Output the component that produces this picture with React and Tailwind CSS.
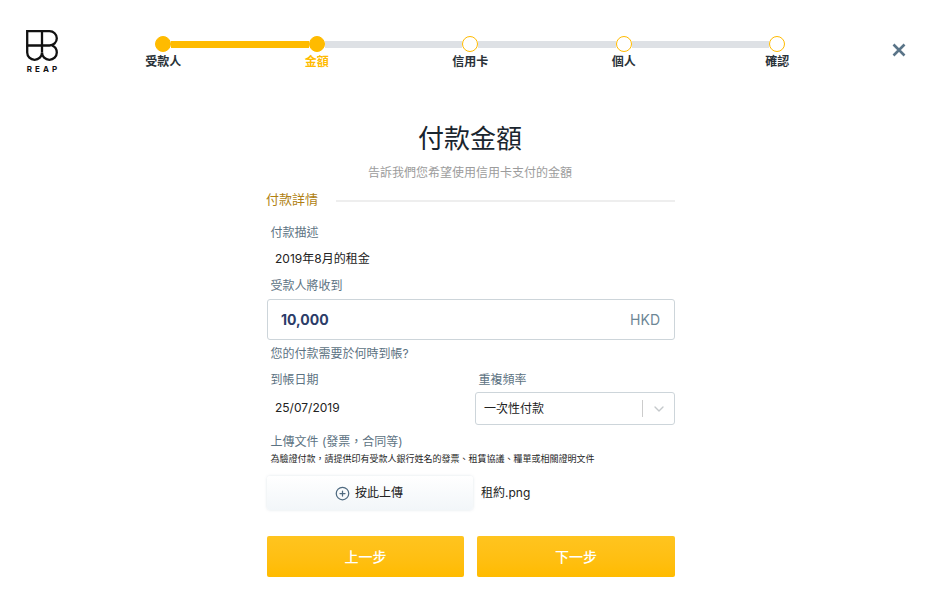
import React from 'react';
import { ChevronDown, CirclePlus } from 'lucide-react';

const steps = [
  { label: '受款人', done: true },
  { label: '金額', done: true, current: true },
  { label: '信用卡' },
  { label: '個人' },
  { label: '確認' },
];

function Logo() {
  return (
    <div className="w-[32px] flex flex-col items-center">
      <svg width="32" height="31" viewBox="0 0 32 31" fill="none" stroke="#111" strokeWidth="2.3">
        <path d="M1.200 1.200H23.500C27.500 1.200 30.800 4.300 30.800 8.200C30.800 12.200 27.500 15.500 23.500 15.500H1.200V1.200Z" />
        <path d="M16 1.200V22.500" />
        <path d="M1.200 15.500V22.500C1.200 26.500 4.500 29.800 8.600 29.800C12.700 29.800 16 26.500 16 22.500C16 26.500 19.300 29.800 23.400 29.800C27.500 29.800 30.800 26.500 30.800 22.500C30.800 19.500 29 16.700 26 15.500" />
      </svg>
      <div className="mt-[3px] text-[8px] leading-[10px] font-bold tracking-[3px] mr-[-3px] text-[#111]">REAP</div>
    </div>
  );
}

function Stepper() {
  return (
    <div className="w-[768px] shrink-0">
      <div className="flex items-center ml-[69px] w-[630px] pt-[6px]">
        {steps.map((s, i) => (
          <React.Fragment key={s.label}>
            {i > 0 && <div className={`flex-1 h-[7px] ${s.done ? 'bg-[#ffbb00]' : 'bg-[#dee1e5]'}`} />}
            <div className={`w-[16px] h-[16px] rounded-full border-[1.5px] border-[#ffbb00] ${s.done ? 'bg-[#ffbb00]' : 'bg-white'}`} />
          </React.Fragment>
        ))}
      </div>
      <div className="flex mt-[1px] ml-[0.5px]">
        {steps.map((s) => (
          <div
            key={s.label}
            className={`w-[153.5px] text-center text-[12px] leading-[18px] font-bold ${s.current ? 'text-[#ffbb00]' : 'text-[#2a3238]'}`}
          >
            {s.label}
          </div>
        ))}
      </div>
    </div>
  );
}

function FieldLabel({ children, className = '' }) {
  return <div className={`pl-[3.500px] text-[12px] leading-[18px] text-[#5c7282] ${className}`}>{children}</div>;
}

export default function App() {
  return (
    <div
      className="w-[947px] h-[615px] bg-white overflow-hidden text-[#222]"
      style={{ fontFamily: 'Inter, "Noto Sans CJK TC", sans-serif' }}
    >
      {/* Header */}
      <div className="flex items-start pt-[30px] pl-[26px]">
        <Logo />
        <div className="ml-[28px]">
          <Stepper />
        </div>
        <svg width="14" height="14" viewBox="0 0 14 14" className="ml-[38px] mt-[13px] shrink-0" stroke="#5a7488" strokeWidth="2.6" fill="none">
          <path d="M1.500 1.500L12.500 12.500M12.500 1.500L1.500 12.500" />
        </svg>
      </div>

      {/* Form */}
      <div className="w-[408px] ml-[267px] mt-[46px]">
        <h1 className="text-center text-[26px] leading-[38px] text-[#1a252e] mr-[2px] font-normal">付款金額</h1>
        <p className="mt-[6px] text-center text-[12px] leading-[18px] text-[#9c9c9c] mr-[2px]">告訴我們您希望使用信用卡支付的金額</p>

        <div className="flex items-center mt-[7px]">
          <span className="ml-[-1px] text-[13px] leading-[20px] text-[#b07f12]">付款詳情</span>
          <div className="ml-[18px] mt-[4px] flex-1 h-[2px] bg-[#eeeeee]" />
        </div>

        <FieldLabel className="mt-[15px]">付款描述</FieldLabel>
        <div className="mt-[8px] pl-[8px] text-[12px] leading-[18px]">2019年8月的租金</div>
        <FieldLabel className="mt-[9px]">受款人將收到</FieldLabel>
        <div className="mt-[4px] h-[41px] flex items-center justify-between pl-[13px] pr-[14px] border border-[#cdd5da] rounded-[3px]">
          <span className="text-[14px] font-bold text-[#2b3c68]">10,000</span>
          <span className="text-[14px] text-[#6d8796]">HKD</span>
        </div>
        <FieldLabel className="mt-[5px]">您的付款需要於何時到帳?</FieldLabel>

        <div className="flex mt-[8px]">
          <div className="w-[208px]">
            <FieldLabel>到帳日期</FieldLabel>
            <div className="mt-[10px] pl-[8px] text-[12px] leading-[18px]">25/07/2019</div>
          </div>
          <div className="w-[200px]">
            <FieldLabel>重複頻率</FieldLabel>
            <div className="mt-[3px] h-[33px] flex items-center border border-[#cdd5da] rounded-[3px] pl-[8px]">
              <span className="flex-1 text-[12px]">一次性付款</span>
              <div className="w-px h-[17px] bg-[#cccccc]" />
              <ChevronDown size={16} className="ml-[8px] mr-[7px] text-[#c4c8cb]" />
            </div>
          </div>
        </div>

        <FieldLabel className="mt-[8px]">上傳文件 (發票，合同等)</FieldLabel>
        <div className="mt-[1px] pl-[3.500px] text-[9px] leading-[14px] text-[#1f1f1f]">為驗證付款，請提供印有受款人銀行姓名的發票、租賃協議、糧單或相關證明文件</div>

        <div className="flex items-center mt-[10px]">
          <div className="w-[206px] h-[34px] flex items-center justify-center gap-[5px] pr-[2px] rounded-[3px] bg-gradient-to-b from-white to-[#f2f6f9] shadow-[0_0_3px_rgba(80,110,140,0.18)]">
            <CirclePlus size={15} strokeWidth={2} className="text-[#4e6a80]" />
            <span className="text-[12px] text-[#222]">按此上傳</span>
          </div>
          <span className="ml-[8px] text-[12px] text-[#222]">租約.png</span>
        </div>

        <div className="flex justify-between mt-[26px]">
          <button className="w-[197px] h-[41px] rounded-[2px] bg-gradient-to-b from-[#ffc41f] to-[#ffbb00] text-white text-[14px] font-medium">上一步</button>
          <button className="w-[198px] h-[41px] rounded-[2px] bg-gradient-to-b from-[#ffc41f] to-[#ffbb00] text-white text-[14px] font-medium">下一步</button>
        </div>
      </div>
    </div>
  );
}
